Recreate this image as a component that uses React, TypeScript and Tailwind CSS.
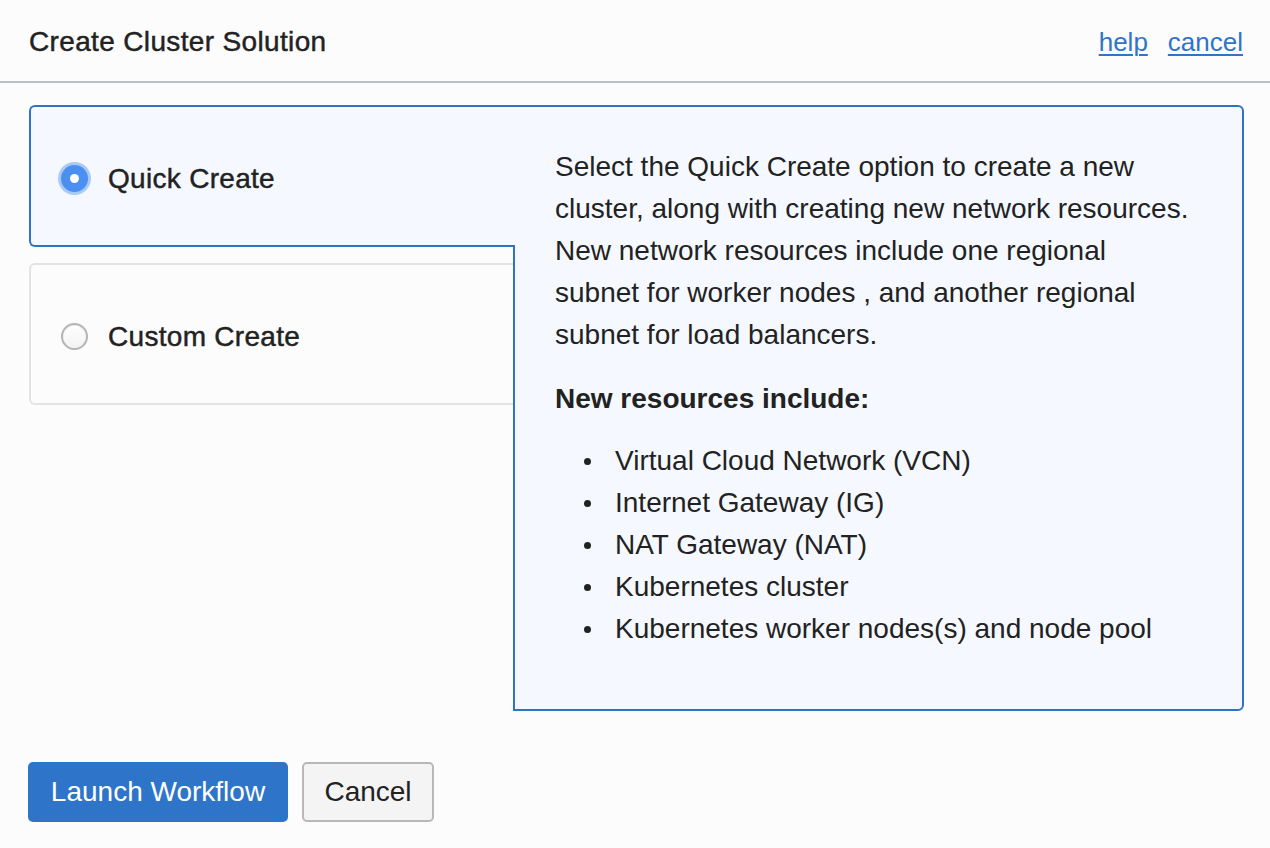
import React from "react";

const items = [
  "Virtual Cloud Network (VCN)",
  "Internet Gateway (IG)",
  "NAT Gateway (NAT)",
  "Kubernetes cluster",
  "Kubernetes worker nodes(s) and node pool",
];

export default function App() {
  return (
    <div className="min-h-[848px] bg-[#fcfcfc] font-['Liberation_Sans',Arial,sans-serif] text-[#222222]">
      <header className="flex h-[83px] items-center justify-between border-b-2 border-[#bcbfc3] pl-[29px] pr-[27px] pt-[3px]">
        <h1 className="text-[28px] leading-none tracking-[0.35px] [-webkit-text-stroke:0.45px_#222222]">
          Create Cluster Solution
        </h1>
        <div className="flex items-center gap-[20px] text-[26px] text-[#2f74c9]">
          <a href="#" className="underline underline-offset-[3px] decoration-[2px]">help</a>
          <a href="#" className="underline underline-offset-[3px] decoration-[2px]">cancel</a>
        </div>
      </header>

      <main className="pl-[28px] pr-[26px] pt-[22px]">
        <div className="ml-[1px] flex">
          <div className="flex w-[484px] flex-col gap-[16px]">
            <label className="relative z-10 -mr-[2px] flex h-[142px] items-center rounded-l-[6px] border-2 border-r-0 border-[#2e73c8] bg-[#f5f9ff] pl-[27px] pt-[5px]">
              <span className="flex h-[33px] w-[33px] items-center justify-center rounded-full bg-[#a9c9f6]">
                <span className="flex h-[27px] w-[27px] items-center justify-center rounded-full bg-[#4b8ff0]">
                  <span className="h-[9px] w-[9px] rounded-full bg-white" />
                </span>
              </span>
              <span className="ml-[17px] text-[28px] leading-none tracking-[0.3px] [-webkit-text-stroke:0.45px_#222222]">
                Quick Create
              </span>
            </label>
            <label className="flex h-[142px] items-center rounded-l-[6px] border-2 border-r-0 border-[#e3e3e3] bg-[#fcfcfc] pl-[30px] pt-[5px]">
              <span className="h-[27px] w-[27px] rounded-full border-2 border-[#b4b4b4] bg-gradient-to-b from-white to-[#f2f2f2] shadow-[inset_0_1px_1px_rgba(0,0,0,0.08)]" />
              <span className="ml-[20px] text-[28px] leading-none tracking-[0.3px] [-webkit-text-stroke:0.45px_#222222]">
                Custom Create
              </span>
            </label>
          </div>

          <div className="h-[606px] flex-1 rounded-r-[6px] border-2 border-[#2e73c8] bg-[#f5f9ff] pl-[40px] pr-[20px] pt-[39px] text-[28px] leading-[42px]">
            <p className="whitespace-nowrap">
              Select the Quick Create option to create a new
              <br />
              cluster, along with creating new network resources.
              <br />
              New network resources include one regional
              <br />
              subnet for worker nodes , and another regional
              <br />
              subnet for load balancers.
            </p>
            <p className="mt-[22px] font-bold">New resources include:</p>
            <ul className="mt-[20px]">
              {items.map((t) => (
                <li key={t} className="flex items-center whitespace-nowrap">
                  <span className="ml-[29px] mr-[24px] h-[7px] w-[7px] rounded-full bg-[#222222]" />
                  {t}
                </li>
              ))}
            </ul>
          </div>
        </div>

        <div className="mt-[51px] flex gap-[14px]">
          <button className="h-[60px] w-[260px] rounded-[5px] bg-[#2e74c9] text-[28px] text-white">
            Launch Workflow
          </button>
          <button className="h-[60px] w-[132px] rounded-[5px] border-2 border-[#b8b8b8] bg-[#f4f4f4] text-[28px] text-[#222222]">
            Cancel
          </button>
        </div>
      </main>
    </div>
  );
}
